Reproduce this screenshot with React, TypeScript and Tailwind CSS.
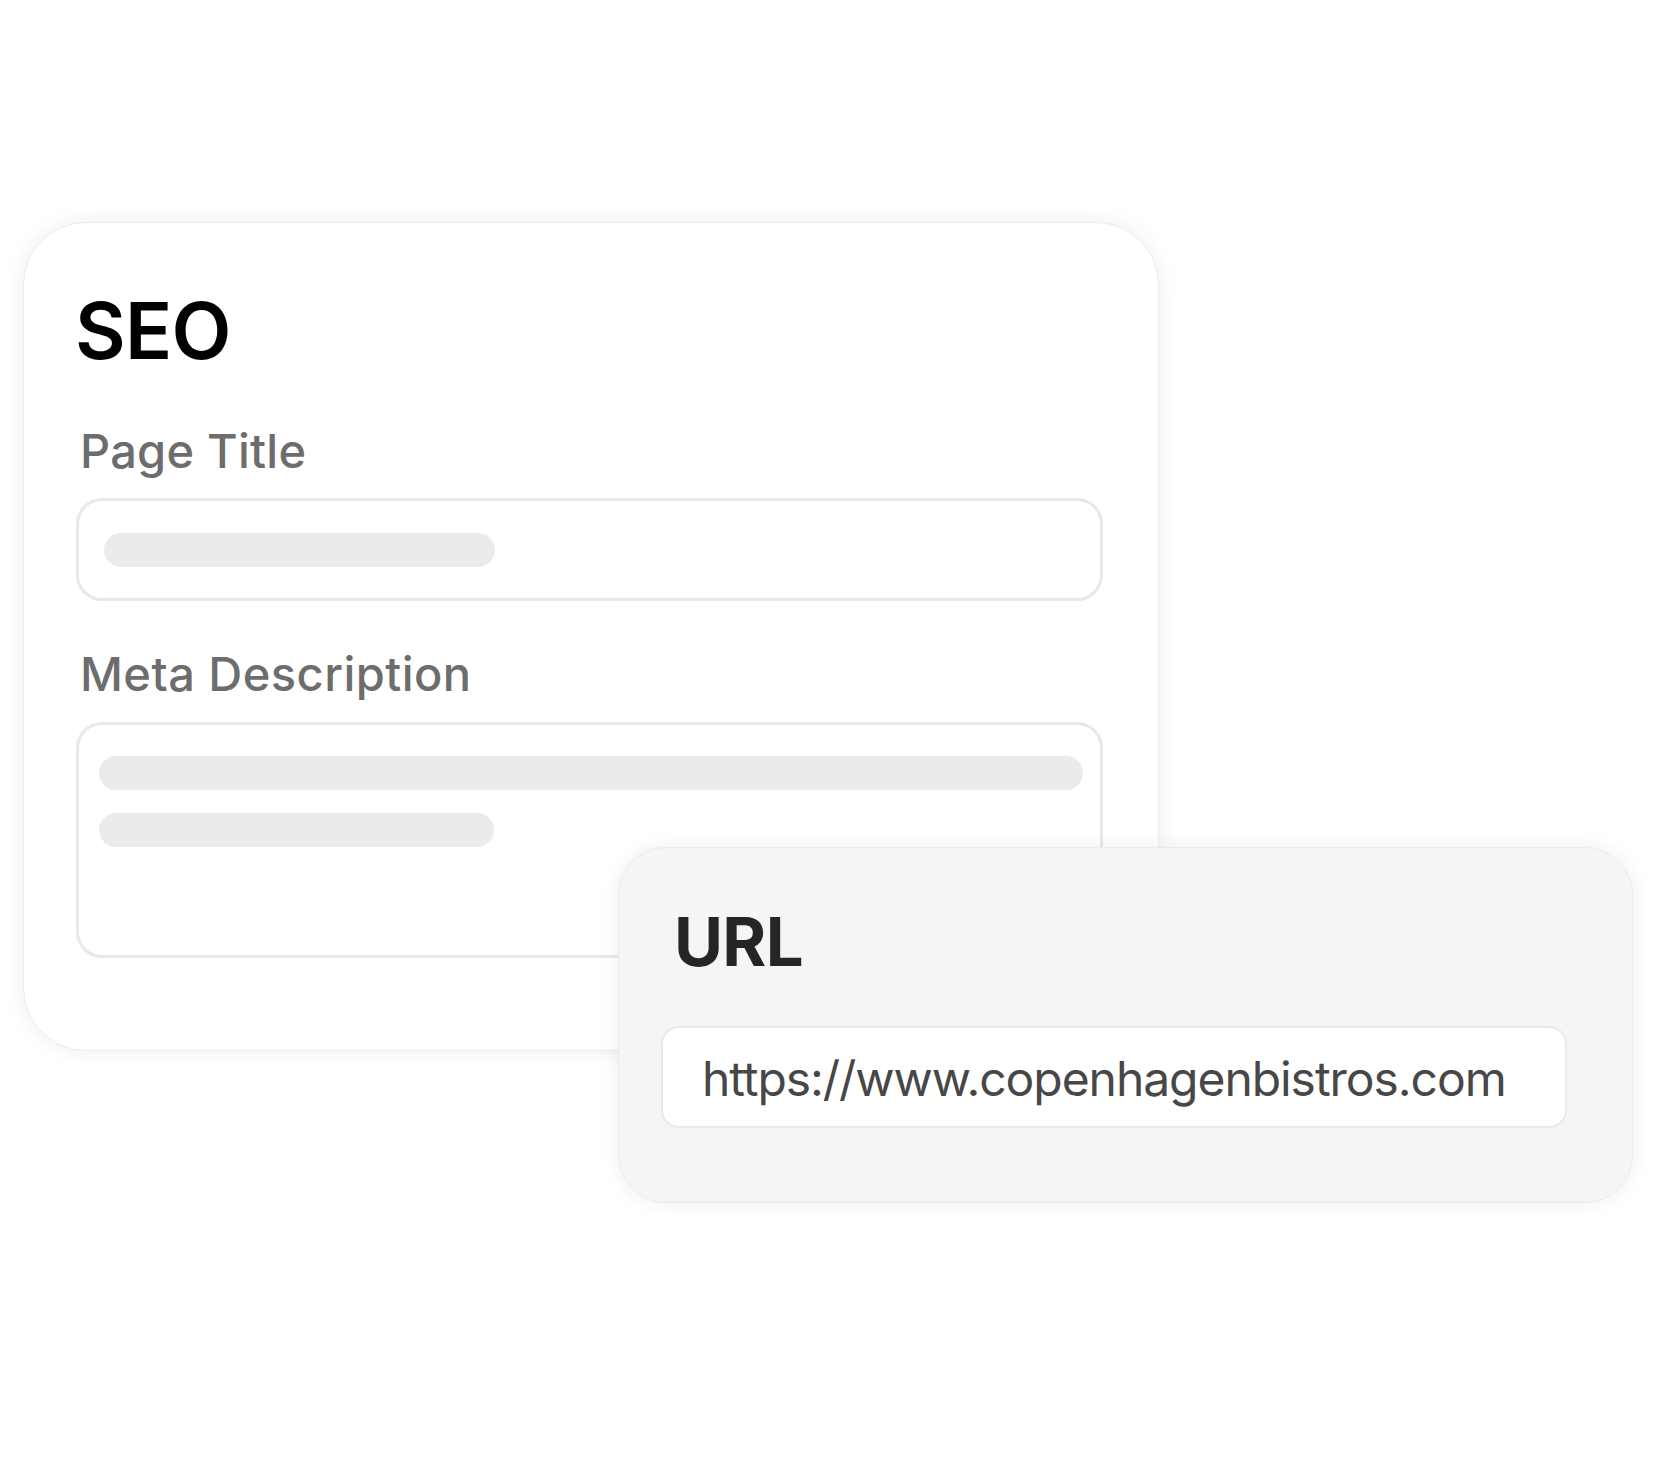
import React from 'react';

const font = { fontFamily: 'Inter, "Noto Sans", sans-serif' };

const Bar = ({ w }: { w: string }) => <div className={`h-[34px] rounded-full bg-[#ebebed] ${w}`} />;

export default function App() {
  return (
    <div className="relative w-[1655px] h-[1470px] bg-white overflow-hidden" style={font}>
      {/* SEO card */}
      <div className="ml-[23px] mt-[222px] w-[1136px] h-[829px] rounded-[63px] bg-white border border-[#ececec] shadow-[0_0_22px_rgba(0,0,0,0.07)] pl-[52px] pr-[55px] pt-[69px] flex flex-col">
        <h1 className="-ml-[1px] text-[78px] leading-none font-semibold text-black tracking-[-0.01em]">SEO</h1>

        <div className="mt-[57px] ml-[4px] text-[47px] leading-none font-medium text-[#6d6d6d] tracking-[0.005em]">Page Title</div>
        <div className="mt-[24px] h-[103px] rounded-[26px] border-[3px] border-[#e8e8e8] flex items-center px-[25px]">
          <Bar w="w-[391px]" />
        </div>

        <div className="mt-[49px] ml-[4px] text-[47px] leading-none font-medium text-[#6d6d6d] tracking-[0.01em]">Meta Description</div>
        <div className="mt-[25px] h-[236px] rounded-[26px] border-[3px] border-[#e8e8e8] flex flex-col gap-[23px] pl-[20px] pr-[17px] pt-[31px]">
          <Bar w="w-full" />
          <Bar w="w-[395px]" />
        </div>
      </div>

      {/* URL card, overlapping */}
      <div className="absolute left-[618px] top-[847px] w-[1015px] h-[356px] rounded-[48px] bg-[#f5f5f7] border border-[#ebebed] shadow-[0_0_20px_rgba(0,0,0,0.07)] pl-[42px] pt-[60px]">
        <h2 className="ml-[13px] text-[67px] leading-none font-bold text-[#252527] tracking-[-0.01em]">URL</h2>
        <div className="mt-[51px] w-[906px] h-[102px] rounded-[18px] bg-white border-2 border-[#e9e9eb] flex items-center pl-[39px] pt-[3px]">
          <span className="text-[48px] leading-none text-[#474747] tracking-[-0.022em]">https://www.copenhagenbistros.com</span>
        </div>
      </div>
    </div>
  );
}
